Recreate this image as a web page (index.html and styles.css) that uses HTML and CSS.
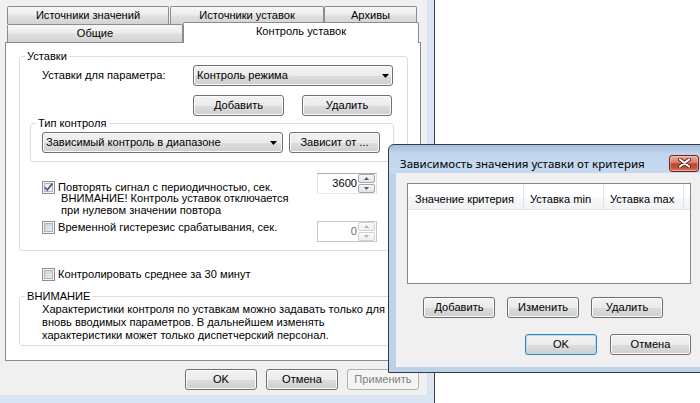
FILE: index.html
```html
<!DOCTYPE html>
<html lang="ru">
<head>
<meta charset="utf-8">
<title>Контроль уставок</title>
<link rel="stylesheet" href="styles.css">
</head>
<body>
<div class="desktop">
  <div class="main-window">
    <div class="main-client">
      <div class="tabstrip">
        <div class="tab-row back-row">
          <div class="tab tab-src">Источники значений</div>
          <div class="tab tab-set">Источники уставок</div>
          <div class="tab tab-arc">Архивы</div>
        </div>
        <div class="tab-row front-row">
          <div class="tab tab-gen">Общие</div>
          <div class="tab tab-ctl">Контроль уставок</div>
        </div>
      </div>
      <div class="tab-page">
        <div class="group group-ustavki">
          <div class="group-title">Уставки</div>
          <div class="row-param">
            <span class="label-param">Уставки для параметра:</span>
            <div class="combo combo-param"><span>Контроль режима</span><svg class="arrow" width="7" height="4" viewBox="0 0 7 4"><polygon points="0,0 7,0 3.5,4" fill="#000"/></svg></div>
          </div>
          <div class="row-buttons">
            <button class="btn btn-add">Добавить</button>
            <button class="btn btn-del">Удалить</button>
          </div>
          <div class="group group-type">
            <div class="group-title">Тип контроля</div>
            <div class="row-type">
              <div class="combo combo-type"><span>Зависимый контроль в диапазоне</span><svg class="arrow" width="7" height="4" viewBox="0 0 7 4"><polygon points="0,0 7,0 3.5,4" fill="#000"/></svg></div>
              <button class="btn btn-dep">Зависит от ...</button>
            </div>
          </div>
          <div class="row-repeat">
            <div class="repeat-left">
              <div class="check"><span class="box checked"><svg width="11" height="11" viewBox="0 0 11 11"><path d="M1.8 5.2 L4.2 8 L9.4 1.6" fill="none" stroke="#44598c" stroke-width="1.7"/></svg></span><span>Повторять сигнал с периодичностью, сек.</span></div>
              <div class="note">ВНИМАНИЕ! Контроль уставок отключается<br>при нулевом значении повтора</div>
            </div>
            <div class="spin">
              <span class="spin-value">3600</span>
              <span class="spin-btns">
                <span class="spin-b"><svg width="5" height="3" viewBox="0 0 5 3"><polygon points="0,3 5,3 2.5,0" fill="#4d5b7a"/></svg></span>
                <span class="spin-b"><svg width="5" height="3" viewBox="0 0 5 3"><polygon points="0,0 5,0 2.5,3" fill="#4d5b7a"/></svg></span>
              </span>
            </div>
          </div>
          <div class="row-hyst">
            <div class="check check-hyst"><span class="box"></span><span>Временной гистерезис срабатывания, сек.</span></div>
            <div class="spin disabled">
              <span class="spin-value">0</span>
              <span class="spin-btns">
                <span class="spin-b"><svg width="5" height="3" viewBox="0 0 5 3"><polygon points="0,3 5,3 2.5,0" fill="#b4b4b4"/></svg></span>
                <span class="spin-b"><svg width="5" height="3" viewBox="0 0 5 3"><polygon points="0,0 5,0 2.5,3" fill="#b4b4b4"/></svg></span>
              </span>
            </div>
          </div>
        </div>
        <div class="check check-avg"><span class="box"></span><span>Контролировать среднее за 30 минут</span></div>
        <div class="group group-warn">
          <div class="group-title">ВНИМАНИЕ</div>
          <div class="warn-text">Характеристики контроля по уставкам можно задавать только для<br>вновь вводимых параметров. В дальнейшем изменять<br>характеристики может только диспетчерский персонал.</div>
        </div>
      </div>
      <div class="main-buttons">
        <button class="btn btn-main">OK</button>
        <button class="btn btn-main">Отмена</button>
        <button class="btn btn-main btn-disabled">Применить</button>
      </div>
    </div>
  </div>

  <div class="dialog">
    <div class="titlebar">
      <span class="title">Зависимость значения уставки от критерия</span>
      <span class="close"><svg width="13" height="10" viewBox="0 0 13 10"><path d="M2 1.5 L11 8.5 M11 1.5 L2 8.5" stroke="#5b2419" stroke-width="4" stroke-linecap="round"/><path d="M2 1.5 L11 8.5 M11 1.5 L2 8.5" stroke="#fff" stroke-width="2.2" stroke-linecap="round"/></svg></span>
    </div>
    <div class="dlg-client">
      <div class="listview">
        <div class="lv-header">
          <div class="lv-col lv-c1">Значение критерия</div>
          <div class="lv-col lv-c2">Уставка min</div>
          <div class="lv-col lv-c3">Уставка max</div>
        </div>
      </div>
      <div class="dlg-actions">
        <button class="btn btn-dlg">Добавить</button>
        <button class="btn btn-dlg">Изменить</button>
        <button class="btn btn-dlg">Удалить</button>
      </div>
      <div class="dlg-footer">
        <button class="btn btn-ok">OK</button>
        <button class="btn btn-cancel">Отмена</button>
      </div>
    </div>
  </div>
</div>
</body>
</html>
```
FILE: styles.css
```css
* { box-sizing: border-box; }
html, body { margin: 0; padding: 0; }
body {
  width: 700px; height: 403px; overflow: hidden; background: #fff;
  font-family: "Liberation Sans", Arial, sans-serif; font-size: 11.1px; line-height: 13px; color: #000;
}
.desktop { position: relative; width: 700px; height: 403px; overflow: hidden; background: #fff; }

/* main window */
.main-window {
  width: 435px; height: 403px; padding: 0 7px 8px 0;
  background: #dae5f3; border-right: 1px solid #434343;
}
.main-client { width: 427px; height: 395px; background: #f0f0f0; display: flex; flex-direction: column; }

/* tabs */
.tabstrip { padding: 6px 0 0 7px; }
.tab-row { display: flex; align-items: flex-start; }
.tab {
  border: 1px solid #898c95; border-bottom: none; border-radius: 2px 2px 0 0;
  background: linear-gradient(#f7f7f7, #ececec 45%, #dfdfdf 55%, #d3d3d3);
  text-align: center; white-space: nowrap;
}
.back-row { height: 18px; }
.back-row .tab { height: 18px; line-height: 17px; }
.tab-src { width: 162px; }
.tab-set { width: 154px; margin-left: 1px; }
.tab-arc { width: 93px; }
.front-row { height: 18px; }
.tab-gen { width: 176px; height: 18px; line-height: 17px; }
.tab-ctl {
  width: 236px; height: 21px; margin-top: -2px; line-height: 17px; padding-bottom: 3px;
  background: #fff; position: relative; z-index: 1;
}

.tab-page { margin-left: 5px; width: 416px; height: 319px; border: 1px solid #898c95; background: #fff; }

/* group boxes */
.group { border: 1px solid #d5dfe5; border-radius: 3px; }
.group-title { width: fit-content; margin: -7px 0 0 5px; padding: 0 2px; background: #fff; line-height: 13px; white-space: nowrap; }
.group-ustavki { margin: 13px 0 0 13px; width: 389px; padding-bottom: 8px; }
.row-param { display: flex; align-items: center; margin-top: 2px; height: 21px; }
.label-param { margin-left: 22px; width: 151px; white-space: nowrap; }

.combo {
  display: flex; align-items: center; justify-content: space-between;
  height: 21px; border: 1px solid #707070; border-radius: 3px;
  background: linear-gradient(#f2f2f2, #ebebeb 50%, #dddddd 51%, #cfcfcf);
  box-shadow: inset 0 0 0 1px #fafafa;
  padding: 0 3px 0 3px; white-space: nowrap;
}
.combo-param { width: 200px; }
.combo-type { width: 241px; padding-right: 5px; }

.btn {
  font: inherit; font-weight: normal; color: #000; margin: 0; padding: 0; height: 21px;
  border: 1px solid #707070; border-radius: 3px;
  background: linear-gradient(#f2f2f2, #ebebeb 50%, #dddddd 51%, #cfcfcf);
  box-shadow: inset 0 0 0 1px #fbfbfb;
  text-align: center; white-space: nowrap; line-height: 17px;
}
.row-buttons { display: flex; gap: 18px; margin: 9px 0 0 173px; }
.btn-add { width: 91px; }
.btn-del { width: 90px; }

.group-type { margin: 7px 0 0 10px; width: 364px; padding-bottom: 8px; }
.row-type { display: flex; gap: 6px; margin: 2px 0 0 11px; }
.btn-dep { width: 91px; }

/* checkboxes */
.check { display: flex; align-items: center; gap: 3px; height: 13px; line-height: 13px; white-space: nowrap; }
.box {
  flex: none; width: 13px; height: 13px; border: 1px solid #8e8f8f;
  background: linear-gradient(135deg, #c7ccd2, #f1f2f3);
  box-shadow: inset 0 0 0 1px #f4f4f4, inset 0 0 0 2px #b0b5bb;
  display: flex;
}
.box.checked { background: linear-gradient(135deg, #e6e8eb, #fbfbfb); }

.row-repeat { display: flex; align-items: flex-start; margin-top: 11px; }
.repeat-left { margin: 8px 0 0 22px; width: 275px; }
.note { margin: -2px 0 0 19px; line-height: 12px; white-space: nowrap; }

.spin {
  display: flex; width: 60px; height: 21px; border: 1px solid;
  border-color: #abadb3 #dbdfe6 #e3e9ef #e2e3ea; background: #fff;
  padding: 0 1px 0 0;
}
.spin-value { flex: 1; text-align: right; line-height: 18px; padding-right: 1px; }
.spin-btns { width: 17px; display: flex; flex-direction: column; gap: 1px; }
.spin-b {
  flex: 1; border: 1px solid #a5a7ab; border-radius: 2px;
  background: linear-gradient(#f7f7f7, #e2e2e2);
  display: flex; align-items: center; justify-content: center;
}
.spin.disabled { border-color: #c7c7c7; }
.spin.disabled .spin-value { color: #6d6d6d; }
.spin.disabled .spin-b { border-color: #d2d2d2; background: linear-gradient(#fafafa, #efefef); }

.row-hyst { display: flex; align-items: flex-start; margin-top: 5px; }
.check-hyst { margin-left: 22px; width: 275px; }

.check-avg { margin: 17px 0 0 36px; }

.group-warn { margin: 15px 0 0 13px; width: 389px; padding-bottom: 3px; }
.warn-text { margin-left: 22px; line-height: 13px; white-space: nowrap; }

.main-buttons { display: flex; justify-content: flex-end; gap: 9px; margin-top: 8px; padding-right: 8px; }
.btn-main { width: 72px; }
.btn-disabled { border-color: #adb2b5; background: #f4f4f4; box-shadow: none; color: #838383; }

/* dialog window */
.dialog {
  position: absolute; left: 388px; top: 144px; width: 322px; height: 229px;
  border: 1px solid #3a3a3a; border-radius: 6px 6px 0 0;
  padding: 0 7px 5px;
  background: linear-gradient(#a4bfe0, #c1d6ee 9px, #c6d9ef 28px, #bcd2eb 29px, #bcd2eb);
  display: flex; flex-direction: column;
}
.titlebar { height: 28px; padding-top: 8px; display: flex; align-items: center; justify-content: space-between; }
.title { margin-left: 4px; font-family: "Noto Sans", "Liberation Sans", sans-serif; font-size: 11.5px; line-height: 15px; white-space: nowrap; }
.close {
  width: 30px; height: 17px; margin-right: 3px;
  border: 1px solid #6f2417; border-radius: 3px;
  background: linear-gradient(#eaa899, #d67d6a 45%, #c3432e 52%, #c5513a 80%, #dc8466);
  box-shadow: inset 0 0 0 1px rgba(255,255,255,0.35);
  display: flex; align-items: center; justify-content: center;
}
.dlg-client { flex: 1; background: #f0f0f0; }

.listview { margin: 10px 11px 0; height: 101px; border: 1px solid #828790; background: #fff; }
.lv-header {
  display: flex; height: 26px; border-bottom: 1px solid #e3e5e8;
  background: linear-gradient(#ffffff, #ffffff 50%, #f7f8f9 51%, #f2f3f5);
}
.lv-col { padding: 9px 0 0 6px; line-height: 13px; border-right: 1px solid #e0e4ea; white-space: nowrap; }
.lv-c1 { width: 116px; padding-left: 7px; }
.lv-c2 { width: 80px; }
.lv-c3 { width: 80px; }

.dlg-actions { display: flex; gap: 12px; margin: 13px 0 0 27px; }
.btn-dlg { width: 72px; }
.dlg-footer { display: flex; justify-content: flex-end; gap: 13px; margin-top: 16px; padding-right: 11px; }
.btn-ok { width: 72px; border-color: #3c7fb1; box-shadow: inset 0 0 0 1px #b1def5; }
.btn-cancel { width: 81px; }
```
